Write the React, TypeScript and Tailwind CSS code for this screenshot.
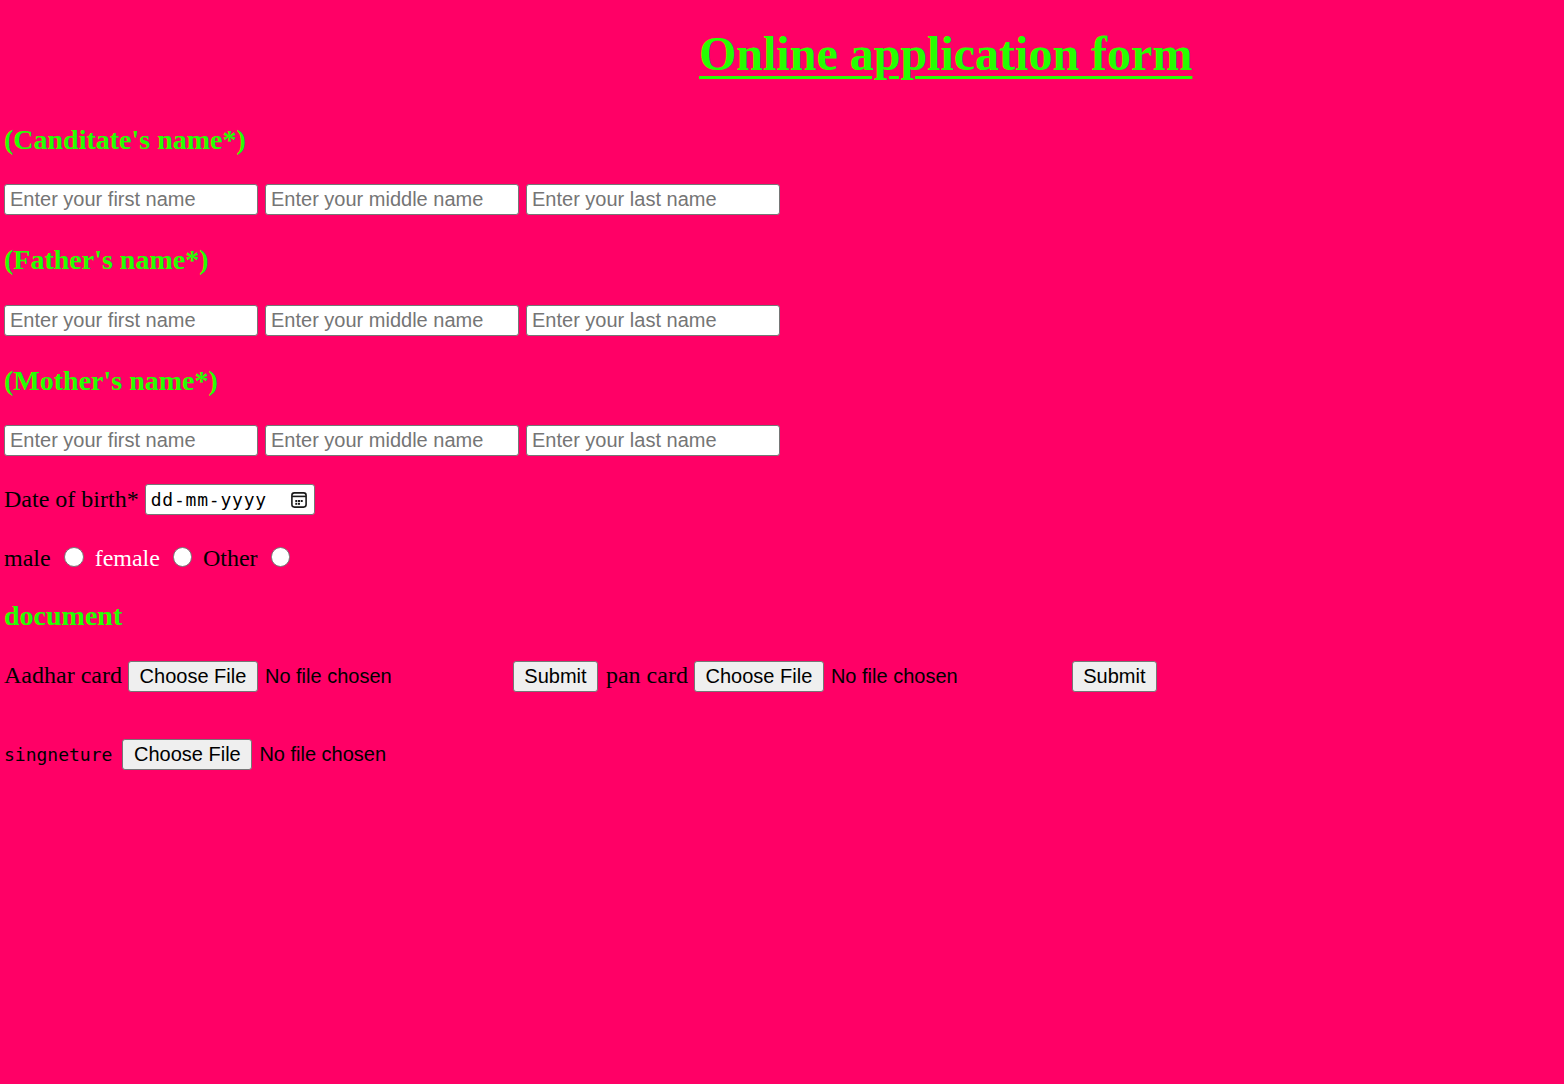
import React from "react";

const serif = "font-['Liberation_Serif','Times_New_Roman',serif]";
const sans = "font-['Liberation_Sans',Arial,sans-serif]";

function Heading({ children, className = "" }: { children: React.ReactNode; className?: string }) {
  return (
    <h3 className={`${serif} text-[28px] leading-[31px] font-bold text-[#26ff00] ${className}`}>{children}</h3>
  );
}

function NameRow({ className = "" }: { className?: string }) {
  const cls = `${sans} box-border h-[31px] w-[254px] rounded-[3px] border border-[#767676] bg-white px-[5px] text-[20px] text-black placeholder:text-[#757575] outline-none`;
  return (
    <div className={`flex gap-[7px] ${className}`}>
      <input className={cls} placeholder="Enter your first name" />
      <input className={cls} placeholder="Enter your middle name" />
      <input className={cls} placeholder="Enter your last name" />
    </div>
  );
}

function Btn({ children, className = "" }: { children: React.ReactNode; className?: string }) {
  return (
    <button
      className={`${sans} box-border h-[31px] whitespace-nowrap rounded-[3px] border border-[#767676] bg-[#efefef] text-[20px] leading-[23px] text-black ${className}`}
    >
      {children}
    </button>
  );
}

function FileInput({ width }: { width: string }) {
  return (
    <div className={`flex items-baseline ${width}`}>
      <Btn className="w-[130px] shrink-0 px-0">Choose File</Btn>
      <span className={`${sans} ml-[7px] whitespace-nowrap text-[20px] leading-[23px] text-black`}>No file chosen</span>
    </div>
  );
}

function Radio({ className = "" }: { className?: string }) {
  return (
    <span
      className={`box-border inline-block h-[19.5px] w-[19.5px] shrink-0 self-start mt-[2px] rounded-full border border-[#767676] bg-white ${className}`}
    />
  );
}

export default function App() {
  return (
    <div className="min-h-[1084px] w-full bg-[#ff0066] pl-[4px] pt-[27px]">
      <h1
        className={`${serif} ml-[695px] text-[48px] leading-[53px] font-bold text-[#26ff00] underline decoration-[3px] underline-offset-[6px]`}
      >
        Online application form
      </h1>

      <Heading className="mt-[44px]">(Canditate's name*)</Heading>
      <NameRow className="mt-[29px]" />

      <Heading className="mt-[29px]">(Father's name*)</Heading>
      <NameRow className="mt-[30px]" />

      <Heading className="mt-[29px]">(Mother's name*)</Heading>
      <NameRow className="mt-[29px]" />

      <div className="mt-[28px] flex h-[31px] items-center">
        <span className={`${serif} text-[24px] leading-[27px] text-black`}>Date of birth*</span>
        <div className="relative ml-[6px] box-border flex h-[31px] w-[170px] items-center rounded-[3px] border border-[#767676] bg-white pl-[5px]">
          <span className="font-['DejaVu_Sans_Mono',monospace] text-[18px] tracking-[0.8px] text-black">dd-mm-yyyy</span>
          <svg className="absolute left-[145px] top-[7px]" width="16" height="16" viewBox="0 0 16 16" fill="none">
            <rect x="0.9" y="0.9" width="14.2" height="14.2" rx="2.5" stroke="#1a1a1a" strokeWidth="1.6" />
            <rect x="1" y="3.6" width="14" height="1.6" fill="#1a1a1a" />
            <rect x="4.3" y="8" width="2" height="2" fill="#1a1a1a" />
            <rect x="7" y="8" width="2" height="2" fill="#1a1a1a" />
            <rect x="9.7" y="8" width="2" height="2" fill="#1a1a1a" />
            <rect x="4.3" y="10.8" width="2" height="2" fill="#1a1a1a" />
            <rect x="7" y="10.8" width="2" height="2" fill="#1a1a1a" />
          </svg>
        </div>
      </div>

      <div className={`${serif} mt-[30px] flex h-[27px] items-start text-[24px] leading-[27px]`}>
        <span className="text-black">male</span>
        <Radio className="ml-[13.5px]" />
        <span className="ml-[11px] text-white">female</span>
        <Radio className="ml-[13px]" />
        <span className="ml-[10.5px] text-black">Other</span>
        <Radio className="ml-[13px]" />
      </div>

      <Heading className="mt-[28px]">document</Heading>

      <div className="mt-[30px] flex items-baseline">
        <span className={`${serif} text-[24px] leading-[27px] text-black`}>Aadhar card</span>
        <div className="ml-[6px]">
          <FileInput width="w-[379px]" />
        </div>
        <Btn className="ml-[6px] w-[85px] px-0">Submit</Btn>
        <span className={`${serif} ml-[8px] text-[24px] leading-[27px] text-black`}>pan card</span>
        <div className="ml-[6px]">
          <FileInput width="w-[372px]" />
        </div>
        <Btn className="ml-[6px] w-[85px] px-0">Submit</Btn>
      </div>

      <div className="mt-[47px] flex items-baseline">
        <span className="font-['DejaVu_Sans_Mono',monospace] text-[18px] leading-[22px] text-black">singneture</span>
        <div className="ml-[10px]">
          <FileInput width="w-[300px]" />
        </div>
      </div>
    </div>
  );
}
